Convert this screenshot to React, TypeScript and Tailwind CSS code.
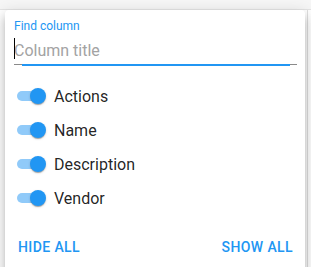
import { useState } from 'react';

const columns = ['Actions', 'Name', 'Description', 'Vendor'];

function Toggle({ checked }: { checked: boolean }) {
  return (
    <span className="flex items-center w-[29px] h-[16px]">
      <span
        className={`w-[26px] h-[10px] rounded-full shrink-0 ${
          checked ? 'bg-[#90caf9]' : 'bg-[#bdbdbd]'
        }`}
      />
      <span
        className={`w-[16px] h-[16px] rounded-full shrink-0 shadow-[0_2px_1px_-1px_rgba(0,0,0,0.2),0_1px_1px_0_rgba(0,0,0,0.14),0_1px_3px_0_rgba(0,0,0,0.12)] ${
          checked ? '-ml-[13px] bg-[#2196f3]' : '-ml-[26px] bg-white'
        }`}
      />
    </span>
  );
}

export default function App() {
  const [query, setQuery] = useState('');
  const [visible, setVisible] = useState<Record<string, boolean>>({
    Actions: true,
    Name: true,
    Description: true,
    Vendor: true,
  });

  const setAll = (value: boolean) =>
    setVisible(Object.fromEntries(columns.map((c) => [c, value])));

  return (
    <div
      className="relative w-[311px] h-[267px] overflow-hidden bg-white"
      style={{ fontFamily: 'Roboto, "Liberation Sans", sans-serif' }}>
      {/* grid behind the popper */}
      <div className="h-[10px] bg-[#f6f6f6] border-b border-[#e4e4e4]" />
      <div className="flex h-[257px]">
        <div className="w-[307px]" />
        <div className="w-px bg-[#e0e0e0]" />
      </div>

      {/* column panel popper */}
      <div className="absolute left-[5px] top-[10px] w-[300px] h-[270px] bg-white rounded-[4px] shadow-[0_5px_5px_-3px_rgba(0,0,0,0.2),0_8px_10px_1px_rgba(0,0,0,0.14),0_3px_14px_2px_rgba(0,0,0,0.12)]">
        <div className="pl-[9px] pr-[8px] pt-[9px]">
          <label className="block text-[12px] leading-[14px] text-[#2196f3]">
            Find column
          </label>
          <div className="relative mt-[8px] pb-[4px] border-b border-[#8a8a8a]">
            <input
              value={query}
              onChange={(e) => setQuery(e.target.value)}
              placeholder="Column title"
              className="block w-full h-[19px] text-[16px] leading-[19px] text-[rgba(0,0,0,0.87)] placeholder:text-[#a3a3a3] outline-none bg-transparent"
            />
            <span className="absolute left-0 top-[-3px] w-px h-[21px] bg-black" />
            <span className="absolute left-[8px] right-[7px] bottom-[-1.5px] h-[2px] bg-[#2196f3]" />
          </div>
        </div>

        <div className="mt-[14px] pl-[12px]">
          {columns.map((col) => (
            <div
              key={col}
              className="flex items-center h-[34px] cursor-pointer"
              onClick={() => setVisible({ ...visible, [col]: !visible[col] })}>
              <Toggle checked={visible[col]} />
              <span className="ml-[8px] text-[16px] leading-[19px] text-[rgba(0,0,0,0.87)]">
                {col}
              </span>
            </div>
          ))}
        </div>

        <div className="mt-[20px] flex justify-between pl-[13px] pr-[12px]">
          <button
            onClick={() => setAll(false)}
            className="h-[24px] leading-[24px] text-[14px] font-medium tracking-[0.4px] text-[#2196f3]">
            HIDE ALL
          </button>
          <button
            onClick={() => setAll(true)}
            className="h-[24px] leading-[24px] text-[14px] font-medium tracking-[0.4px] text-[#2196f3]">
            SHOW ALL
          </button>
        </div>
      </div>
    </div>
  );
}
